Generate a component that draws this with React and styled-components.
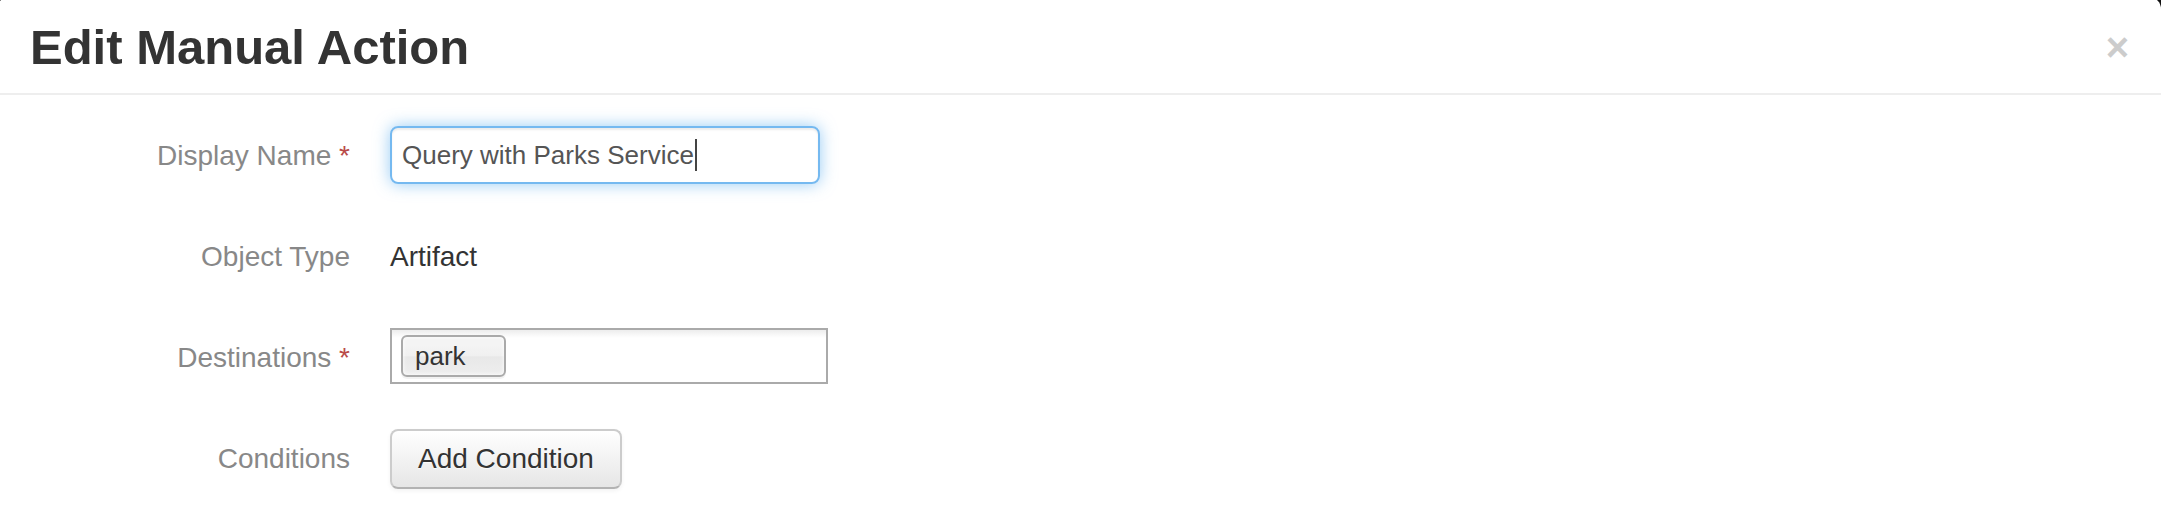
import styled, { createGlobalStyle } from 'styled-components';

const GlobalStyle = createGlobalStyle`
	html, body {
		margin: 0;
		padding: 0;
		background: #111;
		overflow: hidden;
	}
	body {
		font-family: "Liberation Sans", Arial, Helvetica, sans-serif;
	}
	* {
		box-sizing: border-box;
	}
`

const Modal = styled.div`
	background: #fff;
	border-radius: 12px;
	margin: -3px 0 0 -3px;
	width: calc(100% + 3px);
	min-height: calc(100vh + 3px);
`

const Header = styled.div`
	display: flex;
	justify-content: space-between;
	align-items: center;
	padding: 23px 32px 19px 33px;
	border-bottom: 2px solid #eee;
`

const Title = styled.h3`
	margin: 0;
	font-size: 49px;
	line-height: 54px;
	font-weight: bold;
	color: #333;
`

const Close = styled.button`
	background: none;
	border: 0;
	padding: 0;
	font-family: inherit;
	font-size: 40px;
	line-height: 40px;
	font-weight: bold;
	color: #ccc;
	cursor: pointer;
`

const Body = styled.div`
	padding: 31px 30px 30px 33px;
`

const Row = styled.div`
	display: grid;
	grid-template-columns: 320px 1fr;
	column-gap: 40px;
	align-items: start;
	min-height: 60px;
	margin-bottom: 41px;
`

const Label = styled.label`
	padding-top: 10px;
	font-size: 28px;
	line-height: 40px;
	text-align: right;
	color: #888;
`

const Required = styled.span`
	color: #b94a48;
`

const StaticText = styled.div`
	padding-top: 10px;
	font-size: 28px;
	line-height: 40px;
	color: #333;
`

const FocusedField = styled.div`
	width: 430px;
	height: 58px;
	display: flex;
	align-items: center;
	padding: 0 10px;
	border: 2px solid rgba(82, 168, 236, 0.8);
	border-radius: 8px;
	font-size: 26px;
	color: #555;
	box-shadow: inset 0 2px 2px rgba(0, 0, 0, 0.075), 0 0 16px rgba(82, 168, 236, 0.6);
`

const Caret = styled.span`
	display: inline-block;
	width: 2px;
	height: 32px;
	margin-left: 1px;
	background: #444;
`

const ChoiceBox = styled.div`
	width: 438px;
	min-height: 56px;
	display: flex;
	flex-wrap: wrap;
	align-items: flex-start;
	border: 2px solid #aaa;
	background: linear-gradient(#eee 1%, #fff 15%);
`

const Choice = styled.span`
	margin: 5px 0 5px 9px;
	padding: 6px 38px 6px 12px;
	font-size: 26px;
	line-height: 26px;
	color: #333;
	border: 2px solid #aaa;
	border-radius: 6px;
	background: linear-gradient(#f4f4f4 20%, #f0f0f0 50%, #e8e8e8 52%, #eee 100%);
	box-shadow: inset 0 0 4px #fff, 0 2px 0 rgba(0, 0, 0, 0.05);
`

const Button = styled.button`
	justify-self: start;
	font-family: inherit;
	font-size: 28px;
	line-height: 40px;
	padding: 8px 26px;
	color: #333;
	border: 2px solid #ccc;
	border-bottom-color: #b3b3b3;
	border-radius: 8px;
	background: linear-gradient(#fff, #e6e6e6);
	text-shadow: 0 1px 1px rgba(255, 255, 255, 0.75);
	box-shadow: inset 0 2px 0 rgba(255, 255, 255, 0.2), 0 2px 4px rgba(0, 0, 0, 0.05);
	cursor: pointer;
`

const FormRow = ({ label, required, children }) => (
	<Row>
		<Label>
			{label}
			{required && <Required> *</Required>}
		</Label>
		{children}
	</Row>
)

const App = () => {
	return <>
		<GlobalStyle />
		<Modal>
			<Header>
				<Title>Edit Manual Action</Title>
				<Close aria-label="Close">×</Close>
			</Header>
			<Body>
				<FormRow label="Display Name" required>
					<FocusedField>
						Query with Parks Service<Caret />
					</FocusedField>
				</FormRow>
				<FormRow label="Object Type">
					<StaticText>Artifact</StaticText>
				</FormRow>
				<FormRow label="Destinations" required>
					<ChoiceBox>
						<Choice>park</Choice>
					</ChoiceBox>
				</FormRow>
				<FormRow label="Conditions">
					<Button>Add Condition</Button>
				</FormRow>
			</Body>
		</Modal>
	</>
}

export default App;
